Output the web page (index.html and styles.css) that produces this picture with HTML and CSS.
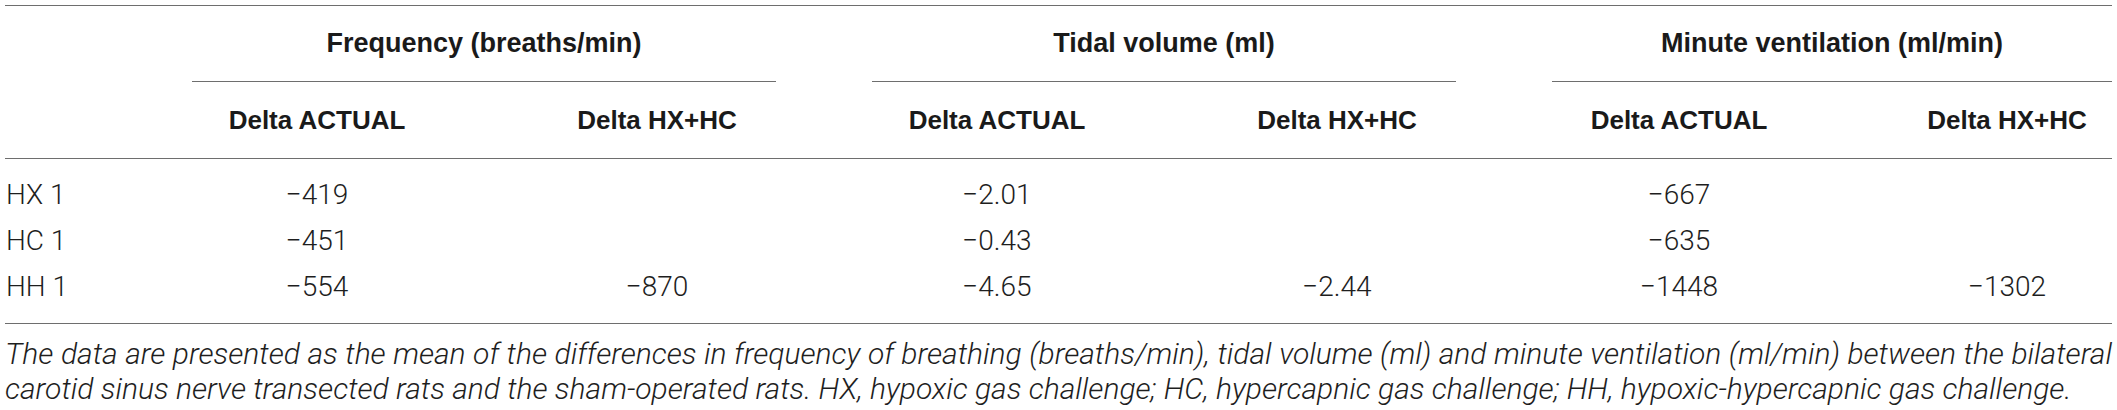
FILE: index.html
```html
<!DOCTYPE html>
<html>
<head>
  <title>Breathing responses</title>
  <link rel="stylesheet" href="styles.css">
</head>
<body>

<table class="data-table">
  <colgroup>
    <col class="col-label">
    <col class="col-actual">
    <col class="col-hxhc">
    <col class="col-actual">
    <col class="col-hxhc">
    <col class="col-actual-last">
    <col class="col-hxhc-last">
  </colgroup>
  <thead>
    <tr class="group-row">
      <th></th>
      <th colspan="2"><div class="group-title">Frequency (breaths/min)</div></th>
      <th colspan="2"><div class="group-title">Tidal volume (ml)</div></th>
      <th colspan="2"><div class="group-title">Minute ventilation (ml/min)</div></th>
    </tr>
    <tr class="sub-row">
      <th></th>
      <th>Delta ACTUAL</th>
      <th>Delta HX+HC</th>
      <th>Delta ACTUAL</th>
      <th>Delta HX+HC</th>
      <th>Delta ACTUAL</th>
      <th>Delta HX+HC</th>
    </tr>
  </thead>
  <tbody>
    <tr>
      <td>HX 1</td>
      <td>&minus;419</td>
      <td></td>
      <td>&minus;2.01</td>
      <td></td>
      <td>&minus;667</td>
      <td></td>
    </tr>
    <tr>
      <td>HC 1</td>
      <td>&minus;451</td>
      <td></td>
      <td>&minus;0.43</td>
      <td></td>
      <td>&minus;635</td>
      <td></td>
    </tr>
    <tr>
      <td>HH 1</td>
      <td>&minus;554</td>
      <td>&minus;870</td>
      <td>&minus;4.65</td>
      <td>&minus;2.44</td>
      <td>&minus;1448</td>
      <td>&minus;1302</td>
    </tr>
  </tbody>
</table>

<p class="caption">
  <span class="caption-line">The data are presented as the mean of the differences in frequency of breathing (breaths/min), tidal volume (ml) and minute ventilation (ml/min) between the bilateral</span>
  <span class="caption-end">carotid sinus nerve transected rats and the sham-operated rats. HX, hypoxic gas challenge; HC, hypercapnic gas challenge; HH, hypoxic-hypercapnic gas challenge.</span>
</p>

</body>
</html>
```

FILE: styles.css
```css
body {
  margin: 0;
  padding: 5px 5px 0 5px;
  background: #fff;
  color: #1e1e1e;
  font-family: Roboto, "Liberation Sans", Arial, sans-serif;
}

.data-table {
  width: 2107px;
  table-layout: fixed;
  border-collapse: collapse;
  border-top: 1px solid #6e6e6e;
}

.col-label { width: 187px; }
.col-actual { width: 346px; }
.col-hxhc { width: 334px; }
.col-actual-last { width: 350px; }
.col-hxhc-last { width: 210px; }

th, td {
  box-sizing: border-box;
  padding: 0 96px 0 0;
  text-align: center;
}

th:last-child, td:last-child {
  padding-right: 0;
}

th {
  font-family: "Liberation Sans", Arial, sans-serif;
  font-weight: bold;
  font-size: 26px;
  color: #1a1a1a;
}

.group-title {
  font-size: 27px;
  line-height: 75px;
  border-bottom: 1px solid #6e6e6e;
}

.sub-row th {
  height: 76px;
  line-height: 76px;
}

.sub-row {
  border-bottom: 1px solid #6e6e6e;
}

td {
  font-weight: 300;
  font-size: 28px;
  line-height: 46px;
  height: 46px;
}

td:first-child {
  text-align: left;
  padding-left: 1px;
}

tbody tr:first-child td {
  padding-top: 13px;
  height: 59px;
}

tbody tr:last-child td {
  padding-bottom: 13px;
  height: 59px;
}

tbody tr:last-child {
  border-bottom: 1px solid #6e6e6e;
}

.caption {
  width: 2107px;
  margin: 12px 0 0 0;
  font-weight: 300;
  font-style: italic;
  font-size: 30px;
  line-height: 35px;
}

.caption-line {
  display: block;
  text-align: justify;
  text-align-last: justify;
}

.caption-end {
  display: block;
}
```
